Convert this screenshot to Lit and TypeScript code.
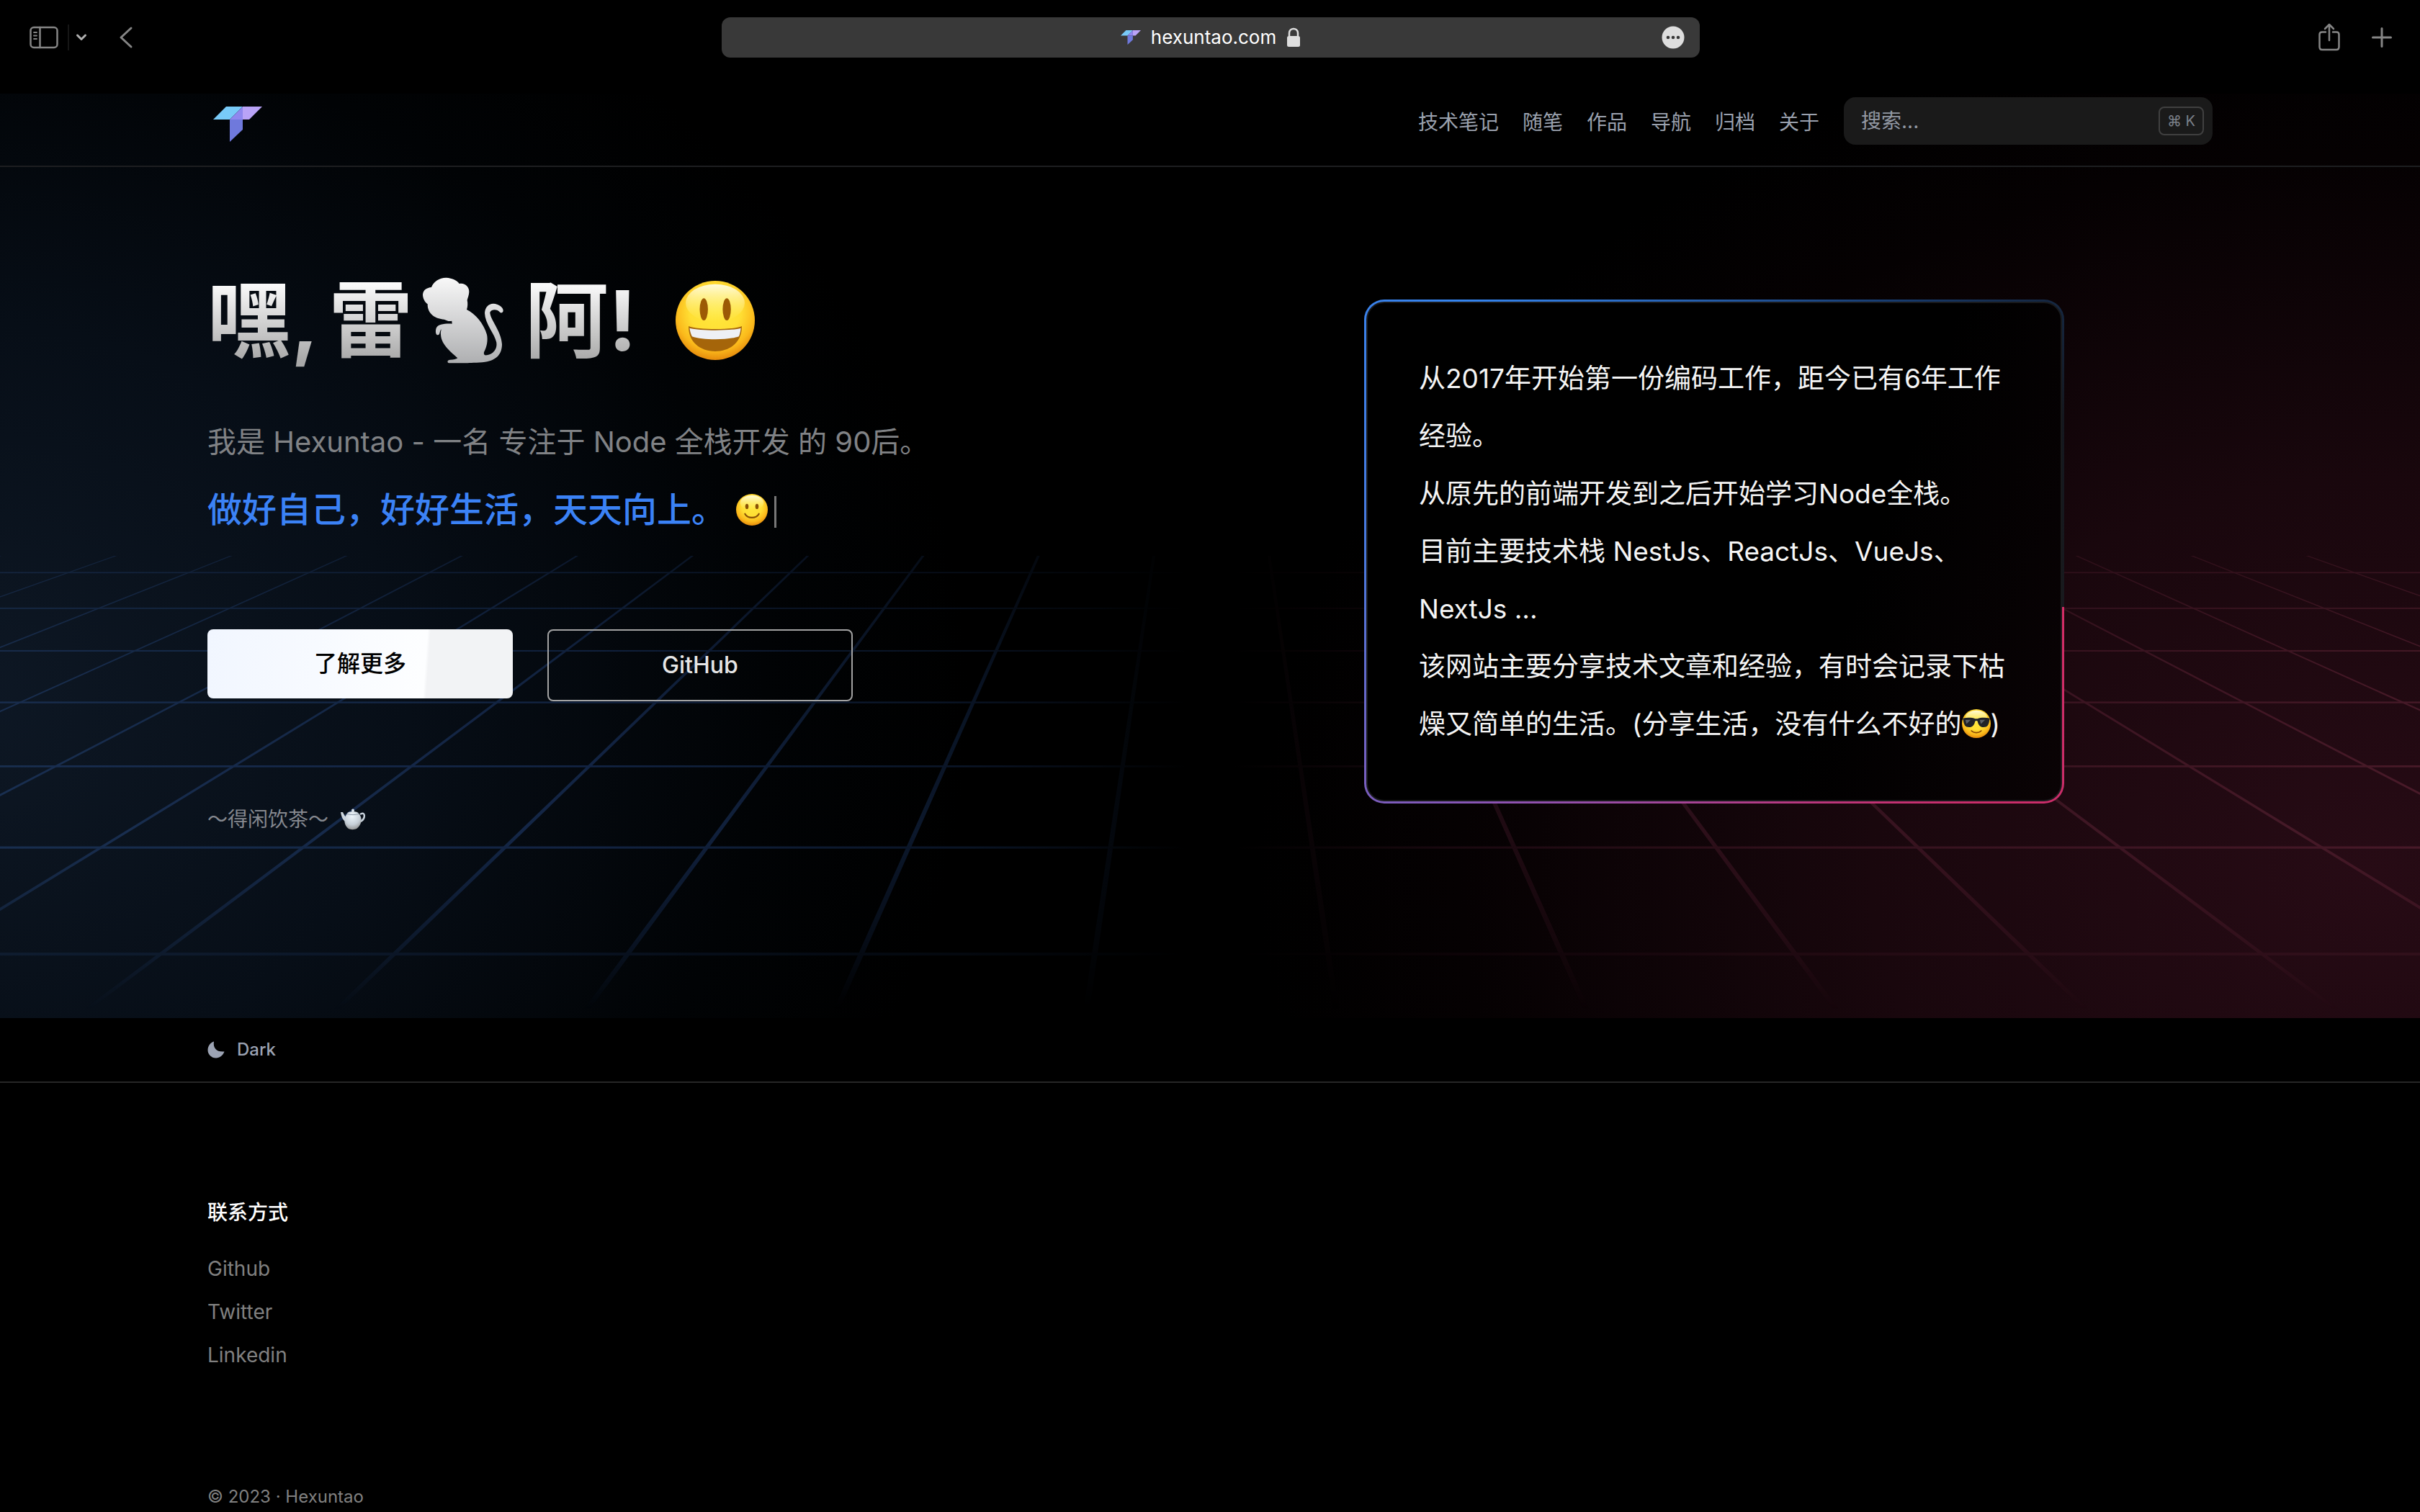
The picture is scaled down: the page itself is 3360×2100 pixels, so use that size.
import { LitElement, html, svg, css } from "lit";
import { customElement, property } from "lit/decorators.js";

const FONT = css`Inter, "Noto Sans CJK SC", "Liberation Sans", sans-serif`;

@customElement("site-logo")
class SiteLogo extends LitElement {
  static styles = css`
    :host { display: block; }
    svg { display: block; width: 100%; height: auto; }
  `;
  render() {
    return html`
      <svg viewBox="0 0 68 49" aria-hidden="true">
        <polygon points="0,18 18,0 41,0 23,18" fill="#78caf8" />
        <polygon points="41,0 68,0 50,18 41,18" fill="#b9a3f7" />
        <polygon points="23,18 41,0 41,18" fill="#8f87ef" />
        <polygon points="23,18 41,18 41,32 23,49" fill="#6f79dc" />
      </svg>
    `;
  }
}

@customElement("face-emoji")
class FaceEmoji extends LitElement {
  @property() kind: "grin" | "smile" | "cool" = "grin";

  static styles = css`
    :host { display: inline-block; }
    svg { display: block; width: 100%; height: auto; }
  `;

  private features() {
    if (this.kind === "grin") {
      return svg`
        <ellipse cx="117" cy="118" rx="17" ry="46" fill="#9c5a05" />
        <ellipse cx="212" cy="118" rx="17" ry="46" fill="#9c5a05" />
        <path d="M54 188 C90 204 240 204 274 188 C276 250 230 292 164 292 C98 292 52 250 54 188Z" fill="#a5650a" />
        <path d="M58 196 C100 208 230 208 270 196 C268 212 266 222 262 230 C220 246 110 246 68 230 C63 220 60 210 58 196Z" fill="#eef0f5" />
      `;
    }
    if (this.kind === "smile") {
      return svg`
        <ellipse cx="112" cy="130" rx="17" ry="27" fill="#8a5206" />
        <ellipse cx="216" cy="130" rx="17" ry="27" fill="#8a5206" />
        <path d="M92 206 C120 258 208 258 236 206" fill="none" stroke="#8a5206" stroke-width="16" stroke-linecap="round" />
      `;
    }
    return svg`
      <path d="M8 104 C60 92 120 96 150 108 L178 108 C208 96 268 92 320 104 L312 130 C306 180 290 206 246 206 C206 206 186 180 178 138 C170 130 158 130 150 138 C142 180 122 206 82 206 C38 206 22 180 16 130Z" fill="#202227" />
      <path d="M40 122 L100 120 L52 168Z M204 122 L264 120 L216 168Z" fill="#5b6068" />
      <path d="M108 246 C136 274 192 274 220 246" fill="none" stroke="#8a4a06" stroke-width="14" stroke-linecap="round" />
    `;
  }

  render() {
    return html`
      <svg viewBox="0 0 328 328" aria-hidden="true">
        <defs>
          <radialGradient id="skin" cx="50%" cy="38%" r="64%">
            <stop offset="0" stop-color="#ffe83c" />
            <stop offset="0.5" stop-color="#ffdf34" />
            <stop offset="0.78" stop-color="#fbb91b" />
            <stop offset="1" stop-color="#e2830a" />
          </radialGradient>
          <linearGradient id="gloss" x1="0" y1="0" x2="0" y2="1">
            <stop offset="0" stop-color="#fffde6" stop-opacity="0.95" />
            <stop offset="1" stop-color="#fff27a" stop-opacity="0" />
          </linearGradient>
        </defs>
        <circle cx="164" cy="164" r="164" fill="url(#skin)" />
        <ellipse cx="164" cy="92" rx="122" ry="78" fill="url(#gloss)" />
        ${this.features()}
      </svg>
    `;
  }
}

@customElement("horizon-grid")
class HorizonGrid extends LitElement {
  static styles = css`
    :host { display: block; }
    svg { display: block; width: 100%; height: 100%; }
  `;

  /* Units: x runs 0-3360, y is measured from the vanishing point. */
  private columns() {
    const top = 540;
    const bottom = 1182;
    const half = 0.0036;
    return Array.from({ length: 34 }, (_, i) => {
      const slope = (i - 16.5) * 0.2966;
      const at = (y: number, s: number) => `${(1682 + y * (slope + s)).toFixed(1)},${y}`;
      return svg`<polygon points="${at(top, -half)} ${at(top, half)} ${at(bottom, half)} ${at(bottom, -half)}" />`;
    });
  }

  private rows() {
    return Array.from({ length: 7 }, (_, i) => {
      const y = 1 / (0.001772 - i * 0.000143);
      const h = 1 + (3 * y * y) / 1200000;
      return svg`<rect x="0" y="${(y - h / 2 - 1).toFixed(1)}" width="3360" height="${h.toFixed(1)}" />`;
    });
  }

  render() {
    return html`
      <svg viewBox="0 540 3360 642" preserveAspectRatio="none" aria-hidden="true">
        <defs>
          <linearGradient id="tint" gradientUnits="userSpaceOnUse" x1="0" y1="0" x2="3360" y2="0">
            <stop offset="0" stop-color="#1a3052" />
            <stop offset="0.25" stop-color="#132545" />
            <stop offset="0.4" stop-color="#0a1527" />
            <stop offset="0.49" stop-color="#000" />
            <stop offset="0.51" stop-color="#000" />
            <stop offset="0.6" stop-color="#1b0910" />
            <stop offset="0.75" stop-color="#35121e" />
            <stop offset="1" stop-color="#4a1b2a" />
          </linearGradient>
          <linearGradient id="fade" x1="0" y1="0" x2="0" y2="1">
            <stop offset="0" stop-color="#fff" stop-opacity="0.55" />
            <stop offset="0.25" stop-color="#fff" stop-opacity="0.9" />
            <stop offset="0.6" stop-color="#fff" />
            <stop offset="0.82" stop-color="#fff" stop-opacity="0.5" />
            <stop offset="0.98" stop-color="#fff" stop-opacity="0" />
          </linearGradient>
          <mask id="veil" maskUnits="userSpaceOnUse" x="0" y="540" width="3360" height="642">
            <rect x="0" y="540" width="3360" height="642" fill="url(#fade)" />
          </mask>
        </defs>
        <g fill="url(#tint)" mask="url(#veil)">${this.rows()}${this.columns()}</g>
      </svg>
    `;
  }
}

@customElement("browser-bar")
class BrowserBar extends LitElement {
  static styles = css`
    :host {
      display: grid;
      grid-template-columns: 1fr minmax(0, 1358px) 1fr;
      align-items: center;
      height: 104px;
      padding: 0 34px 0 36px;
      margin-bottom: 26px;
      box-sizing: border-box;
      font-family: ${FONT};
    }
    .side { display: flex; align-items: center; }
    .end { justify-content: flex-end; gap: 34px; }
    button {
      display: flex;
      padding: 4px;
      border: 0;
      background: none;
      color: #858585;
    }
    svg { display: block; fill: none; stroke: currentColor; stroke-linecap: round; stroke-linejoin: round; }
    .rule { width: 2px; height: 36px; margin: 0 5px 0 8px; background: #161616; }
    .chevron { color: #b0b0b0; margin-right: 36px; }
    .address {
      display: grid;
      grid-template-columns: 1fr auto 1fr;
      align-items: center;
      height: 56px;
      padding: 0 17px;
      border-radius: 12px;
      background: #393939;
    }
    .site {
      grid-column: 2;
      display: flex;
      align-items: center;
      gap: 14px;
      color: #fff;
      font-size: 26px;
      line-height: 32px;
      text-decoration: none;
    }
    .site site-logo { width: 28px; }
    .lock { color: #dedede; }
    .more { justify-self: end; color: #dedede; }
  `;

  render() {
    return html`
      <div class="side">
        <button aria-label="Sidebar">
          <svg width="42" height="34" viewBox="0 0 42 34" stroke-width="2.5">
            <rect x="2.5" y="3" width="37" height="28" rx="4.5" />
            <path d="M15.5 3V31" />
            <path d="M7 10H11M7 14.5H11M7 19H11" stroke-width="1.8" />
          </svg>
        </button>
        <span class="rule"></span>
        <button class="chevron" aria-label="Tab groups">
          <svg width="16" height="16" viewBox="0 0 16 16" stroke-width="3"><path d="M2.5 5L8 10.5L13.5 5" /></svg>
        </button>
        <button aria-label="Back">
          <svg width="20" height="32" viewBox="0 0 20 32" stroke-width="3"><path d="M17 3L3 16L17 29" /></svg>
        </button>
      </div>
      <div class="address">
        <a class="site" href="#">
          <site-logo></site-logo>
          <span>hexuntao.com</span>
          <svg class="lock" width="20" height="28" viewBox="0 0 20 28" stroke-width="2.5">
            <rect x="1" y="12" width="18" height="15" rx="2.5" fill="currentColor" stroke="none" />
            <path d="M4 12V8C4 0 16 0 16 8V12" />
          </svg>
        </a>
        <button class="more" aria-label="Page settings">
          <svg width="32" height="32" viewBox="0 0 32 32">
            <circle cx="16" cy="16" r="15.5" fill="currentColor" stroke="none" />
            <g fill="#393939" stroke="none">
              <circle cx="9" cy="16" r="2.3" /><circle cx="16" cy="16" r="2.3" /><circle cx="23" cy="16" r="2.3" />
            </g>
          </svg>
        </button>
      </div>
      <div class="side end">
        <button aria-label="Share">
          <svg width="32" height="40" viewBox="0 0 32 40" stroke-width="2.5">
            <path d="M11 12.5H6C3.5 12.5 2.5 14 2.5 16V33C2.5 35.5 4 37 6 37H26C28 37 29.5 35.5 29.5 33V16C29.5 14 28.5 12.5 26 12.5H21" />
            <path d="M16 24V2.5M10 8L16 2L22 8" />
          </svg>
        </button>
        <button aria-label="New tab">
          <svg width="30" height="30" viewBox="0 0 30 30" stroke-width="3"><path d="M15 2.5V27.5M2.5 15H27.5" /></svg>
        </button>
      </div>
    `;
  }
}

const NAV = ["技术笔记", "随笔", "作品", "导航", "归档", "关于"];
const CONTACTS = ["Github", "Twitter", "Linkedin"];

@customElement("app-root")
class AppRoot extends LitElement {
  static styles = css`
    :host {
      display: block;
      min-height: 100vh;
      background: #000;
      color: #fff;
      font-family: ${FONT};
    }
    * { box-sizing: border-box; }
    h1, h2, p, ul { margin: 0; padding: 0; font-weight: 400; }
    ul { list-style: none; }
    a { color: inherit; text-decoration: none; }
    .wrap { max-width: 3072px; margin: 0 auto; padding: 0 144px; }

    .stage {
      position: relative;
      background:
        radial-gradient(ellipse 42% 92% at -2% 66%, #0e1825, #070e17 45%, #010305 80%, transparent),
        radial-gradient(ellipse 46% 94% at 98% 84%, #270b15, #19070d 45%, #050102 82%, transparent),
        #000;
    }
    .floor { position: absolute; inset: 50% 0 0; }
    .stage > header, .stage > main { position: relative; }

    .top { border-bottom: 2px solid #1d1e20; }
    .top .wrap { display: flex; align-items: center; height: 100px; padding-bottom: 24px; }
    .brand { width: 68px; margin: 8px 0 0 8px; }
    .nav { display: flex; gap: 33px; margin: 4px 34px 0 auto; color: #9aa1ae; font-size: 28px; line-height: 40px; }
    .search {
      display: flex;
      align-items: center;
      width: 512px;
      height: 66px;
      padding: 0 12px 0 24px;
      border-radius: 16px;
      background: #1a1a1a;
    }
    .search input {
      flex: 1;
      min-width: 0;
      padding: 0;
      border: 0;
      outline: 0;
      background: none;
      color: #fff;
      font: 28px/40px ${FONT};
    }
    .search input::placeholder { color: #9298a3; opacity: 1; }
    kbd {
      display: grid;
      place-items: center;
      width: 63px;
      height: 40px;
      border: 2px solid #404040;
      border-radius: 8px;
      color: #7b8089;
      font: 20px/24px Inter, "DejaVu Sans", sans-serif;
    }

    .hero {
      display: grid;
      grid-template-columns: 1fr 1fr;
      column-gap: 16px;
      align-items: center;
      padding-top: 142px;
      padding-bottom: 256px;
    }
    .title {
      display: flex;
      align-items: center;
      gap: 14px;
      font-size: 116px;
      line-height: 142px;
      font-weight: 700;
    }
    .title span {
      background: linear-gradient(#fff 10%, #a8a8a8 90%);
      -webkit-background-clip: text;
      background-clip: text;
      color: transparent;
    }
    .monkey { width: 128px; height: 120px; }
    .grin { width: 110px; margin-left: 40px; }
    .intro { margin-top: 68px; color: #808285; font-size: 40px; line-height: 60px; }
    .typed {
      display: flex;
      align-items: center;
      margin-top: 34px;
      color: #3b82f6;
      font-size: 48px;
      line-height: 60px;
      font-weight: 500;
    }
    .typed face-emoji { width: 44px; margin-left: 14px; }
    .caret { width: 3px; height: 44px; margin: 6px 0 0 9px; background: #777; }
    .actions { display: flex; align-items: flex-start; gap: 48px; margin-top: 136px; }
    .btn {
      display: flex;
      align-items: center;
      justify-content: center;
      width: 424px;
      height: 96px;
      border-radius: 8px;
      font-size: 32px;
      line-height: 40px;
      font-weight: 500;
    }
    .solid { background: linear-gradient(94deg, #f1f6ff, #fdfeff 71%, #f2f3f5 72%); color: #000; }
    .line { height: 100px; border: 2px solid #a3a3a3; color: #e6e6e6; }
    .motto {
      display: flex;
      align-items: center;
      gap: 16px;
      margin-top: 144px;
      color: #85888f;
      font-size: 28px;
      line-height: 40px;
    }
    .pot { width: 36px; height: 30px; }

    .card {
      justify-self: center;
      width: 972px;
      max-width: 100%;
      padding: 3px;
      border-radius: 28px;
      background:
        conic-gradient(from 90deg at 50% 61%, #d42d66 0%, #c92d6a 10%, #8d52b0 38%, #4a78dc 52%, #3584ee 64%, #173a6c 84%, #14181f 92%, #181a1e 100%);
    }
    .story {
      padding: 65px 70px 65px 71px;
      border: 2px solid #191a1c;
      border-radius: 25px;
      background: linear-gradient(110deg, #000 68%, #0a0305);
      color: #f5f5f5;
      font-size: 37px;
      line-height: 80px;
      white-space: nowrap;
    }
    .story face-emoji { width: 40px; vertical-align: -6px; }

    .theme { border-bottom: 2px solid #262626; }
    .theme .wrap { display: flex; align-items: center; height: 88px; }
    .theme button {
      display: flex;
      align-items: center;
      gap: 17px;
      padding: 0;
      border: 0;
      background: none;
      color: #9ca3b3;
      font: 500 24px/32px ${FONT};
    }
    .contact { padding-top: 160px; }
    .contact h2 { font-size: 28px; line-height: 40px; font-weight: 500; }
    .contact ul { margin-top: 28px; color: #808080; font-size: 28px; line-height: 60px; }
    .legal { margin-top: 150px; padding-bottom: 4px; color: #808080; font-size: 24px; line-height: 34px; }
  `;

  render() {
    return html`
      <browser-bar></browser-bar>
      <div class="stage">
        <horizon-grid class="floor"></horizon-grid>
        <header class="top">
          <div class="wrap">
            <a class="brand" href="#" aria-label="Hexuntao"><site-logo></site-logo></a>
            <nav class="nav">${NAV.map((n) => html`<a href="#">${n}</a>`)}</nav>
            <label class="search">
              <input type="search" placeholder="搜索..." aria-label="搜索" />
              <kbd>⌘ K</kbd>
            </label>
          </div>
        </header>
        <main>
          <div class="wrap hero">
            <section>
              <h1 class="title">
                <span>嘿,</span>
                <span>雷</span>
                <svg class="monkey" viewBox="51 46 384 360" role="img" aria-label="🐒">
                  <defs>
                    <linearGradient id="silver" x1="0" y1="0" x2="0" y2="1">
                      <stop offset="0" stop-color="#f8f8f8" />
                      <stop offset="1" stop-color="#aeafb1" />
                    </linearGradient>
                  </defs>
                  <path
                    fill="url(#silver)"
                    d="M148 48C175 50 195 60 203 73C225 68 245 85 244 108C243 122 238 132 236 142C239 155 238 170 234 181C270 198 305 240 318 285C323 310 318 335 306 358C304 370 310 372 318 371C345 366 362 345 358 318C350 280 310 240 309 195C311 170 325 157 345 156C365 156 388 172 386 186C384 197 373 196 368 188C360 180 338 178 331 192C330 220 378 270 381 325C381 365 360 392 310 399C280 403 240 402 235 404L160 404C152 402 152 390 165 390C180 390 190 388 196 383C175 362 128 330 126 285C125 275 127 270 128 263C120 270 124 285 115 287C104 288 103 270 107 258C115 242 140 239 173 240L172 228C160 232 150 226 140 222C105 220 70 200 71 158C60 150 51 135 51 118C53 98 68 90 87 88C95 65 120 48 148 48Z"
                  />
                </svg>
                <span>阿!</span>
                <face-emoji class="grin" kind="grin"></face-emoji>
              </h1>
              <p class="intro">我是 Hexuntao - 一名 专注于 Node 全栈开发 的 90后。</p>
              <p class="typed">做好自己，好好生活，天天向上。<face-emoji kind="smile"></face-emoji><span class="caret"></span></p>
              <div class="actions">
                <a class="btn solid" href="#">了解更多</a>
                <a class="btn line" href="#">GitHub</a>
              </div>
              <p class="motto">
                ～得闲饮茶～
                <svg class="pot" viewBox="0 0 36 30" role="img" aria-label="🫖">
                  <defs>
                    <radialGradient id="china" cx="45%" cy="25%" r="80%">
                      <stop offset="0" stop-color="#eef6fc" />
                      <stop offset="0.6" stop-color="#c6cfd8" />
                      <stop offset="1" stop-color="#8e8d8c" />
                    </radialGradient>
                  </defs>
                  <path d="M28 8C35 3 37 14 27 19" fill="none" stroke="#c9d3dd" stroke-width="2.5" />
                  <path d="M1 5L4 5C6 9 7 11 9 12L9 19C4 17 2 11 1 5Z" fill="#ccd6df" />
                  <circle cx="18" cy="2.5" r="2" fill="#dbe4ec" />
                  <path d="M10 7C11 3 25 3 26 7C33 14 29 24 23 28C20 29.5 15 29.5 12 28C6 24 4 14 10 7Z" fill="url(#china)" />
                  <path d="M10 7.5C14 9 22 9 26 7.5" fill="none" stroke="#8b98a6" stroke-width="1" />
                </svg>
              </p>
            </section>
            <article class="card">
              <div class="story">
                <p>从2017年开始第一份编码工作，距今已有6年工作<br />经验。</p>
                <p>从原先的前端开发到之后开始学习Node全栈。</p>
                <p>目前主要技术栈 NestJs、ReactJs、VueJs、<br />NextJs ...</p>
                <p>该网站主要分享技术文章和经验，有时会记录下枯<br />燥又简单的生活。(分享生活，没有什么不好的<face-emoji kind="cool"></face-emoji>)</p>
              </div>
            </article>
          </div>
        </main>
      </div>
      <footer>
        <div class="theme">
          <div class="wrap">
            <button>
              <svg width="24" height="24" viewBox="0 0 24 24" aria-hidden="true">
                <path d="M9 0.5C7.5 10 13 15.5 23.5 14.5C21.5 20 17 23.5 12 23.5C5.5 23.5 0.5 18.5 0.5 12.5C0.5 7 4 2 9 0.5Z" fill="currentColor" />
              </svg>
              Dark
            </button>
          </div>
        </div>
        <div class="wrap contact">
          <h2>联系方式</h2>
          <ul>
            ${CONTACTS.map((c) => html`<li><a href="#">${c}</a></li>`)}
          </ul>
          <p class="legal">© 2023 · Hexuntao</p>
        </div>
      </footer>
    `;
  }
}
